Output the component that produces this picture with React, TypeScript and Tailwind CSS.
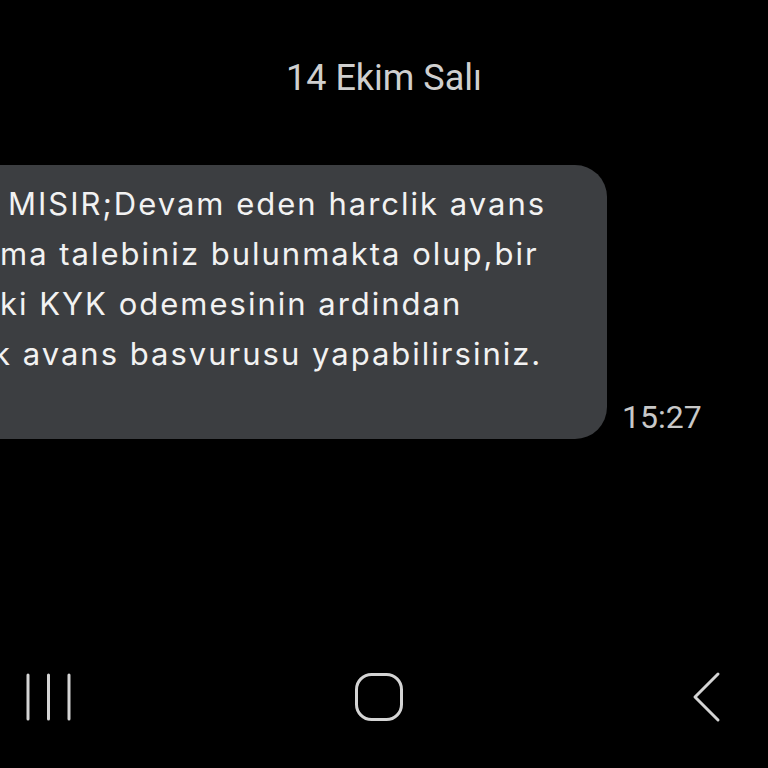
const LINES = [
  { text: 'MISIR;Devam eden harclik avans', indent: 'pl-[8px]' },
  { text: 'ma talebiniz bulunmakta olup,bir', indent: '' },
  { text: 'ki KYK odemesinin ardindan', indent: '' },
  { text: 'k avans basvurusu yapabilirsiniz.', indent: '-ml-[7px]' },
]

function RecentsIcon() {
  return (
    <svg width="48" height="50" viewBox="0 0 48 50" fill="none" stroke="#d4d4d4" strokeWidth="3" strokeLinecap="round">
      <line x1="3" y1="3" x2="3" y2="47" />
      <line x1="23.5" y1="3" x2="23.5" y2="47" />
      <line x1="44" y1="3" x2="44" y2="47" />
    </svg>
  )
}

function HomeIcon() {
  return (
    <svg width="50" height="50" viewBox="0 0 50 50" fill="none" stroke="#d4d4d4" strokeWidth="3">
      <rect x="2.5" y="2.5" width="45" height="45" rx="15" />
    </svg>
  )
}

function BackIcon() {
  return (
    <svg width="30" height="52" viewBox="0 0 30 52" fill="none" stroke="#d4d4d4" strokeWidth="3" strokeLinecap="round" strokeLinejoin="round">
      <polyline points="26,3 3,26 26,49" />
    </svg>
  )
}

export default function App() {
  return (
    <div
      className="flex h-[768px] w-[768px] flex-col overflow-hidden bg-black text-white antialiased"
      style={{ fontFamily: 'Roboto, "Noto Sans", sans-serif' }}
    >
      {/* Date header */}
      <div className="flex justify-center pt-[56px]">
        <span className="text-[36px] leading-[44px] text-[#cfcfcf]">14 Ekim Salı</span>
      </div>

      {/* Message row */}
      <div className="mt-[65px] flex items-end">
        <div className="w-[607px] overflow-hidden rounded-r-[32px] bg-[#3c3e41] pt-[14px] pb-[60px]">
          {LINES.map((line) => (
            <div
              key={line.text}
              className={`whitespace-nowrap text-[31px] leading-[50px] tracking-[2px] text-[#f2f2f2] ${line.indent}`}
              style={{ fontFamily: 'Inter, Roboto, sans-serif' }}
            >
              {line.text}
            </div>
          ))}
        </div>
        <span className="mb-[4px] ml-[15px] text-[32px] leading-[36px] text-[#c8c8c8]">15:27</span>
      </div>

      {/* Navigation bar */}
      <div className="mt-auto mb-[45px] flex items-center px-[25px]">
        <RecentsIcon />
        <div className="ml-[281px]">
          <HomeIcon />
        </div>
        <div className="ml-auto pr-[21px]">
          <BackIcon />
        </div>
      </div>
    </div>
  )
}
